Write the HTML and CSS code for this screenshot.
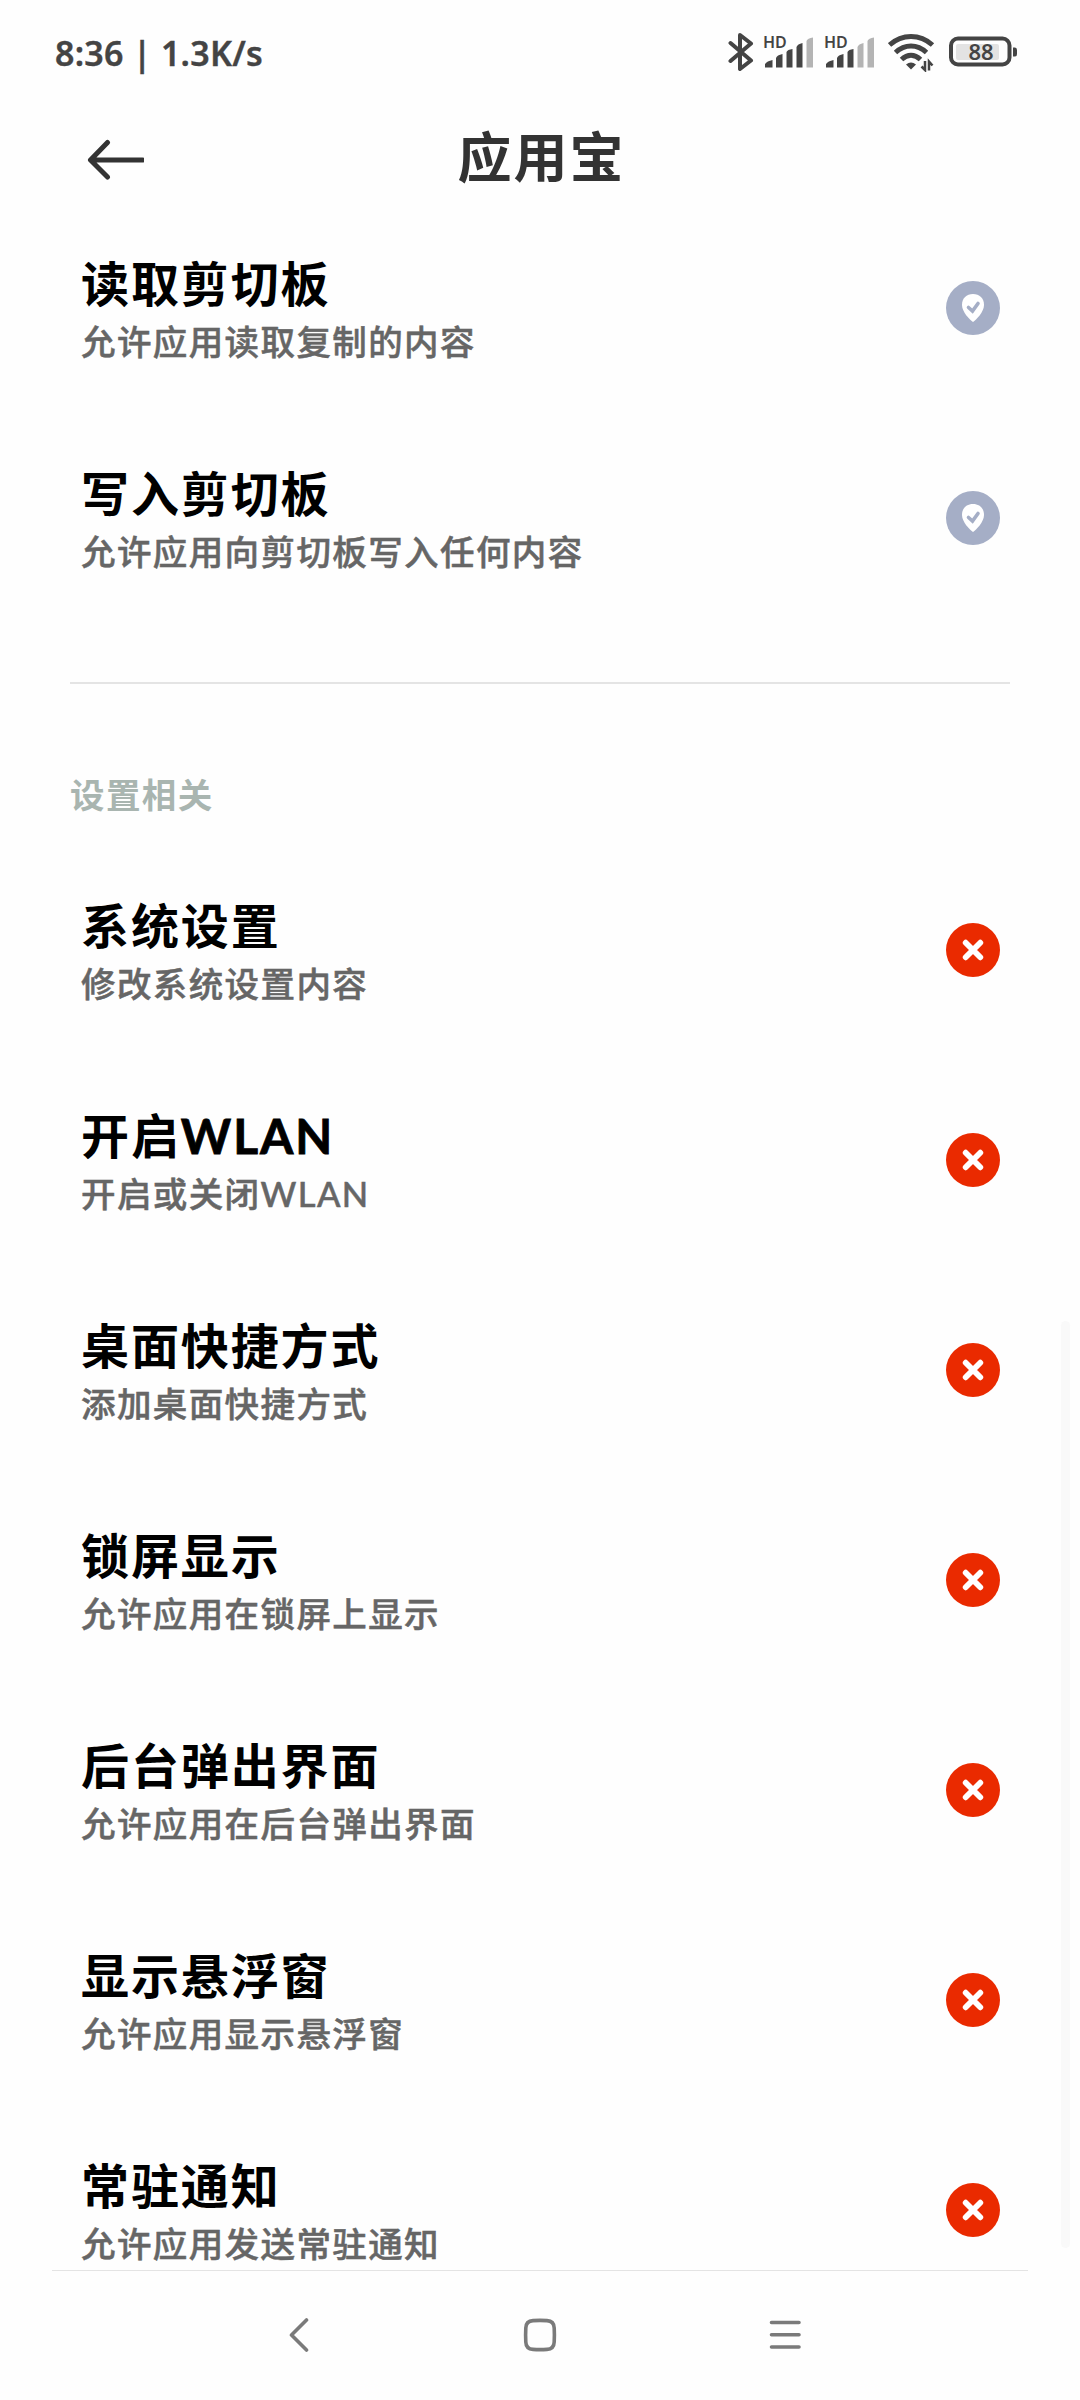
FILE: index.html
```html
<!DOCTYPE html>
<html lang="zh-CN">
    <head>
        <meta charset="UTF-8" />
        <meta name="viewport" content="width=device-width, initial-scale=1.0" />
        <title>应用宝</title>
        <link rel="stylesheet" href="styles.css">
    </head>
    <body>
        <!-- shared icons -->
        <svg class="defs">
            <symbol id="shield" viewBox="0 0 54 54">
                <circle cx="27" cy="27" r="27" fill="#a5aec6" />
                <path d="M27 41C24 39 16 31 16 24C16 17 20.500 13 27 13S38 17 38 24C38 31 30 39 27 41Z" fill="#fff" />
                <path d="M22.500 26.500L26.500 30L32 22.500" fill="none" stroke="#a5aec6" stroke-width="3.600" stroke-linecap="round" />
            </symbol>
            <symbol id="deny" viewBox="0 0 54 54">
                <circle cx="27" cy="27" r="27" fill="#ea2a00" />
                <path d="M19.700 19.700L34.300 34.300M34.300 19.700L19.700 34.300" stroke="#fff" stroke-width="5.800" stroke-linecap="round" />
            </symbol>
        </svg>

        <div class="status">
            <div class="clock">8:36 | 1.3K/s</div>
            <div class="status-icons">
                <svg class="bluetooth" width="26" height="40" viewBox="0 0 26 40">
                    <path d="M2.500 11L23 28.500L12 37V3L23 11.500L2.500 29" />
                </svg>
                <svg class="signal" width="51" height="40" viewBox="0 0 51 40">
                    <text x="0" y="16">HD</text>
                    <path d="M2 35.500V32Q4 29 9.500 28V35.500Z" />
                    <path d="M13 35.500V26Q14 23 19.500 22V35.500Z" />
                    <path d="M23.500 35.500V20Q24.500 17.500 29.500 17V35.500Z" />
                    <path d="M33.500 35.500V15Q34.500 12 39.500 11V35.500Z" />
                    <path class="off" d="M43.500 35.500V9Q44.500 6 50 5.500V35.500Z" />
                </svg>
                <svg class="signal" width="51" height="40" viewBox="0 0 51 40">
                    <text x="0" y="16">HD</text>
                    <path d="M2 35.500V32Q4 29 9.500 28V35.500Z" />
                    <path d="M13 35.500V26Q14 23 19.500 22V35.500Z" />
                    <path d="M23.500 35.500V20Q24.500 17.500 29.500 17V35.500Z" />
                    <path class="off" d="M33.500 35.500V15Q34.500 12 39.500 11V35.500Z" />
                    <path class="off" d="M43.500 35.500V9Q44.500 6 50 5.500V35.500Z" />
                </svg>
                <svg class="wifi" width="47" height="40" viewBox="0 0 47 40">
                    <path d="M1.500 13Q11 4.500 23 4.500T44.500 13" />
                    <path d="M7.500 20.500Q14.500 14 23 14T38.500 20.500" />
                    <path d="M13.500 27.500Q18 23.200 23 23.200T32.500 27.500" />
                    <path class="solid" d="M18 32.500Q23 28.500 28 32.500L23 37.500Z" />
                    <path class="data" d="M37 29V38L33.500 34.500M41 38.500V29.500L44.500 33.500" />
                </svg>
                <svg class="battery" width="69" height="40" viewBox="0 0 69 40">
                    <rect class="case" x="2" y="6.500" width="58.500" height="26" rx="7" />
                    <rect x="7" y="12" width="43" height="16" rx="2" fill="#e3e3e3" />
                    <path d="M64 15.500H66Q68 15.500 68 18V22Q68 24.500 66 24.500H64Z" fill="#444" />
                    <text x="32" y="28" text-anchor="middle">88</text>
                </svg>
            </div>
        </div>

        <header class="header">
            <svg class="back" width="60" height="42" viewBox="0 0 60 42">
                <path d="M58.500 21H7M23.500 3.500L6.500 21L23.500 38" />
            </svg>
            <h1>应用宝</h1>
        </header>

        <main class="list">
            <div class="row">
                <div class="text">
                    <h2>读取剪切板</h2>
                    <p>允许应用读取复制的内容</p>
                </div>
                <svg class="state"><use href="#shield" /></svg>
            </div>
            <div class="row">
                <div class="text">
                    <h2>写入剪切板</h2>
                    <p>允许应用向剪切板写入任何内容</p>
                </div>
                <svg class="state"><use href="#shield" /></svg>
            </div>

            <div class="divider"></div>
            <h3>设置相关</h3>

            <div class="row">
                <div class="text">
                    <h2>系统设置</h2>
                    <p>修改系统设置内容</p>
                </div>
                <svg class="state"><use href="#deny" /></svg>
            </div>
            <div class="row">
                <div class="text">
                    <h2>开启<span class="latin">WLAN</span></h2>
                    <p>开启或关闭<span class="latin">WLAN</span></p>
                </div>
                <svg class="state"><use href="#deny" /></svg>
            </div>
            <div class="row">
                <div class="text">
                    <h2>桌面快捷方式</h2>
                    <p>添加桌面快捷方式</p>
                </div>
                <svg class="state"><use href="#deny" /></svg>
            </div>
            <div class="row">
                <div class="text">
                    <h2>锁屏显示</h2>
                    <p>允许应用在锁屏上显示</p>
                </div>
                <svg class="state"><use href="#deny" /></svg>
            </div>
            <div class="row">
                <div class="text">
                    <h2>后台弹出界面</h2>
                    <p>允许应用在后台弹出界面</p>
                </div>
                <svg class="state"><use href="#deny" /></svg>
            </div>
            <div class="row">
                <div class="text">
                    <h2>显示悬浮窗</h2>
                    <p>允许应用显示悬浮窗</p>
                </div>
                <svg class="state"><use href="#deny" /></svg>
            </div>
            <div class="row">
                <div class="text">
                    <h2>常驻通知</h2>
                    <p>允许应用发送常驻通知</p>
                </div>
                <svg class="state"><use href="#deny" /></svg>
            </div>
            <div class="scrollbar"></div>
        </main>

        <nav class="nav">
            <svg width="34" height="34" viewBox="0 0 34 34">
                <path d="M28.500 2L13.500 17L28.500 32" />
            </svg>
            <svg width="34" height="34" viewBox="0 0 34 34">
                <path d="M10 2.600Q17 2.200 24 2.600Q31 3 31.200 10Q31.600 17 31.200 24Q31 31 24 31.400Q17 31.800 10 31.400Q3 31 2.800 24Q2.400 17 2.800 10Q3 3 10 2.600Z" />
            </svg>
            <svg width="34" height="34" viewBox="0 0 34 34">
                <path d="M3.500 4.500H31M3.500 16.800H31M3.500 29H31" />
            </svg>
        </nav>
    </body>
</html>
```

FILE: styles.css
```css
* {
    box-sizing: border-box;
}
body {
    margin: 0;
    height: 2400px;
    display: flex;
    flex-direction: column;
    overflow: hidden;
    background: #fefefe;
    font-family: "Noto Sans CJK SC", sans-serif;
}
h1, h2, h3, p {
    margin: 0;
    white-space: nowrap;
}
.defs {
    display: none;
}

/* status bar */
.status {
    height: 104px;
    padding: 0 62px 0 55px;
    display: flex;
    align-items: center;
    justify-content: space-between;
    color: #444;
}
.clock {
    padding-top: 1px;
    font-family: "Noto Sans", sans-serif;
    font-size: 34px;
    font-weight: 600;
    letter-spacing: 0.250px;
    -webkit-text-stroke: 0.400px #444;
}
.status-icons {
    display: flex;
    gap: 10px;
}
.bluetooth {
    position: relative;
    left: 1px;
}
.bluetooth path {
    fill: none;
    stroke: #444;
    stroke-width: 4;
    stroke-linejoin: round;
    stroke-linecap: round;
}
.signal {
    fill: #444;
    overflow: visible;
}
.signal .off {
    fill: #b4b4b4;
}
.signal text {
    font: 600 16px "Noto Sans", sans-serif;
}
.wifi {
    margin-left: 3px;
}
.wifi path {
    fill: none;
    stroke: #444;
    stroke-width: 5;
}
.wifi .solid {
    fill: #444;
    stroke: none;
}
.wifi .data {
    stroke-width: 2.500;
}
.battery {
    margin-left: 4px;
}
.battery .case {
    fill: none;
    stroke: #444;
    stroke-width: 4;
}
.battery text {
    font: 600 22px "Noto Sans", sans-serif;
    fill: #444;
}

/* title bar */
.header {
    height: 99px;
    padding: 13px 84px 0;
    display: grid;
    grid-template-columns: 60px 1fr 60px;
    align-items: center;
}
.back path {
    fill: none;
    stroke: #333;
    stroke-width: 5;
    stroke-linecap: round;
    stroke-linejoin: round;
}
.header h1 {
    padding: 0 0 10px 3px;
    font-size: 54px;
    font-weight: 700;
    line-height: 60px;
    letter-spacing: 2px;
    text-align: center;
    color: #333;
}

/* permissions */
.list {
    flex: 1;
    min-height: 0;
    position: relative;
    overflow: hidden;
}
.row {
    height: 210px;
    padding: 0 80px 0 81px;
    display: flex;
    align-items: center;
    justify-content: space-between;
}
.text {
    padding-top: 8px;
}
.text h2 {
    font-size: 48px;
    font-weight: 700;
    line-height: 54px;
    padding-bottom: 2px;
    letter-spacing: 1.900px;
    color: #000;
}
.text p {
    font-size: 34.500px;
    font-weight: 500;
    line-height: 60px;
    letter-spacing: 1.400px;
    color: #666;
    -webkit-text-stroke: 0.500px #666;
}
.latin {
    font-family: Lato, sans-serif;
    line-height: 1;
}
h2 .latin {
    -webkit-text-stroke: 0.800px #000;
}
.state {
    width: 54px;
    height: 54px;
}
.divider {
    height: 2px;
    margin: 59px 70px 0;
    background: #e4e4e4;
}
h3 {
    height: 161px;
    padding: 81px 0 0 70px;
    font-size: 34.500px;
    font-weight: 700;
    line-height: 56px;
    letter-spacing: 1.400px;
    color: #a9b5b0;
}
.scrollbar {
    position: absolute;
    top: 1118px;
    right: 10px;
    width: 9px;
    height: 927px;
    border-radius: 5px;
    background: #f9f9f9;
}

/* system navigation */
.nav {
    height: 130px;
    margin: 0 52px;
    padding: 0 226px 2px;
    border-top: 1px solid #e4e4e4;
    display: flex;
    align-items: center;
    justify-content: space-between;
}
.nav path {
    fill: none;
    stroke: #7a7a7a;
    stroke-width: 3.600;
    stroke-linecap: round;
    stroke-linejoin: round;
}
```
